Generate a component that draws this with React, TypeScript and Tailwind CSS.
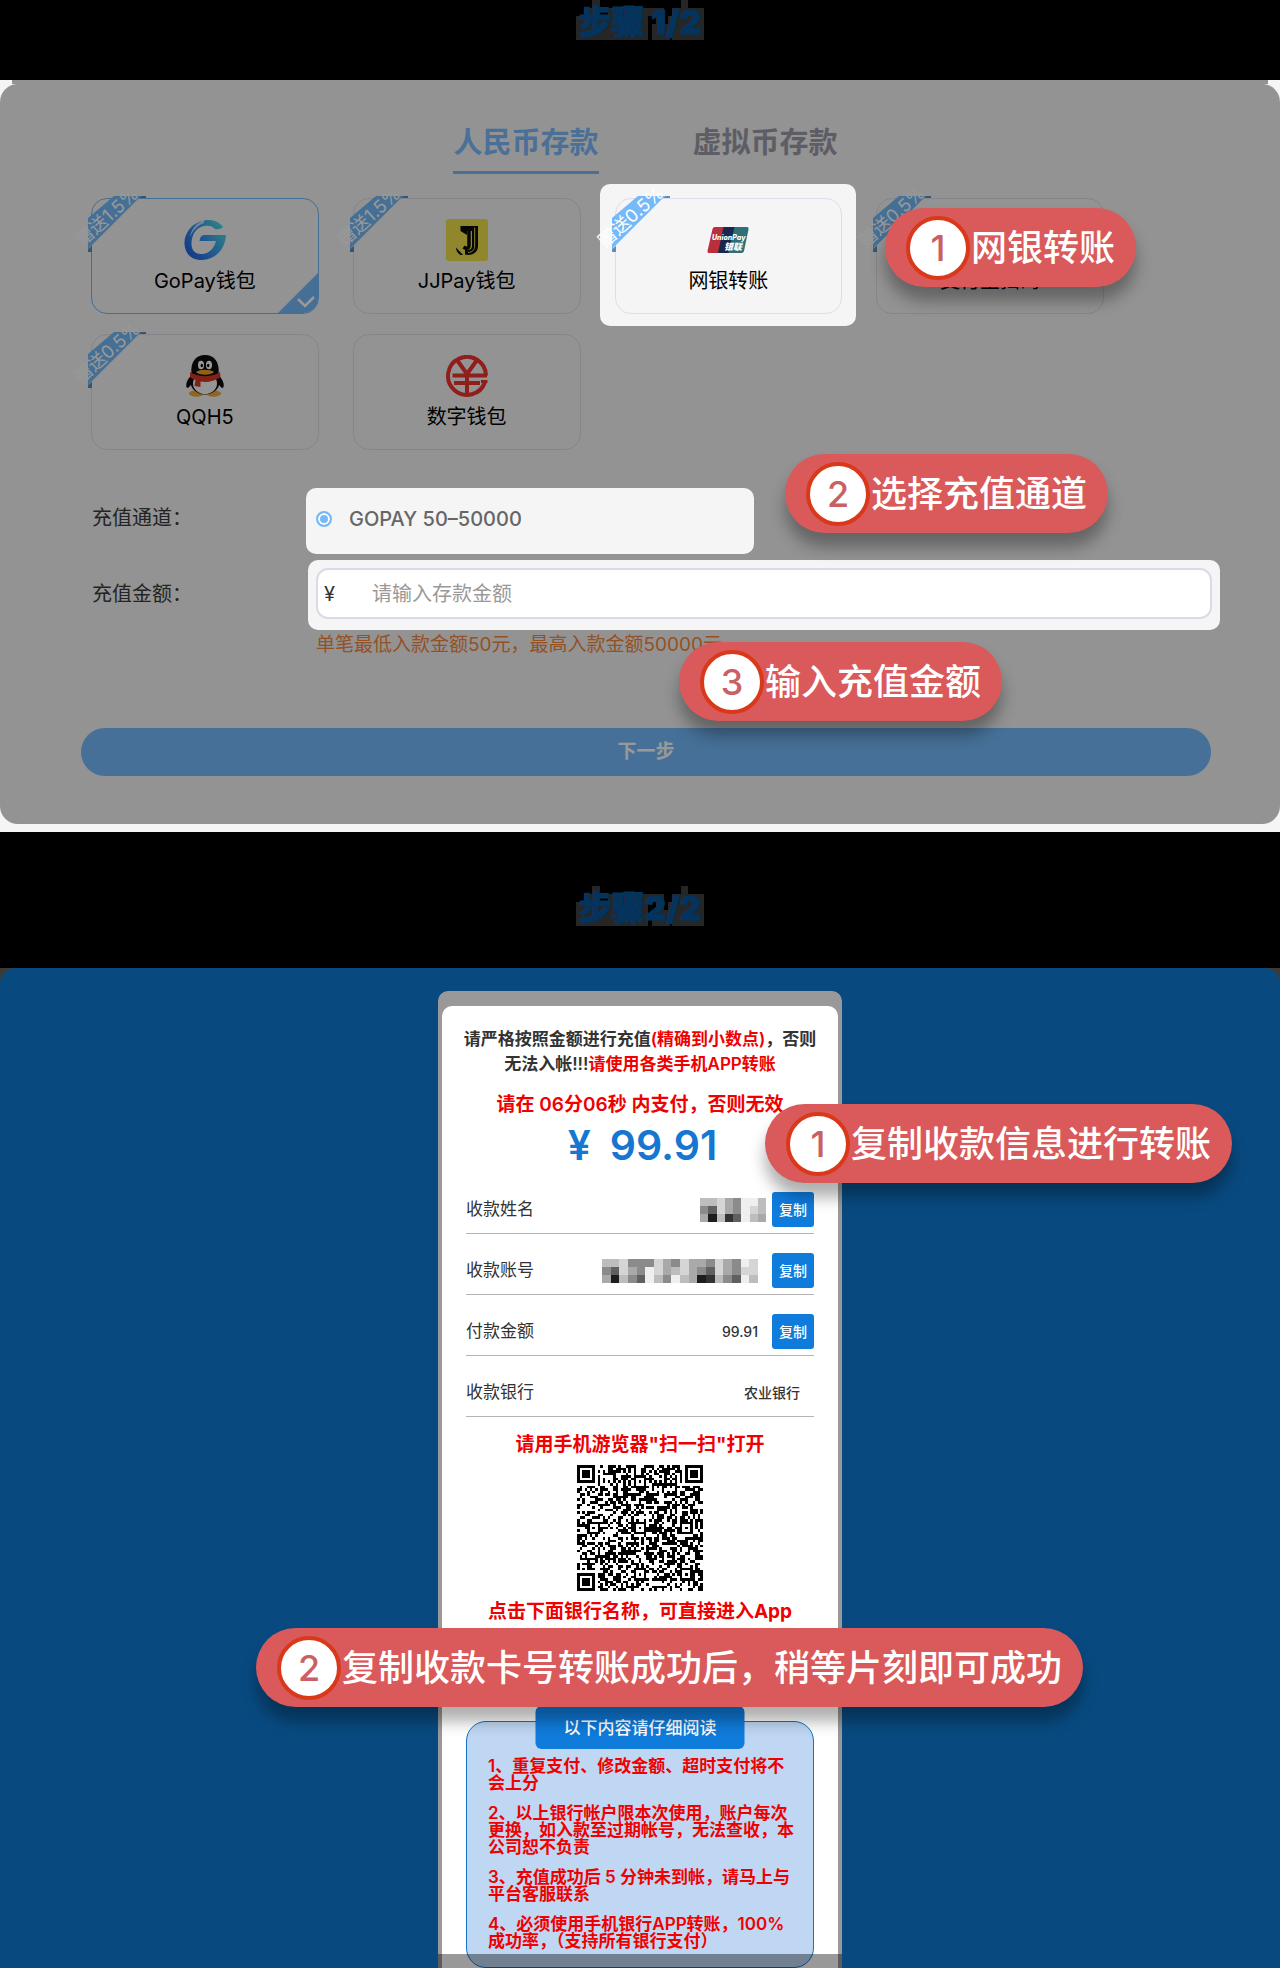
import type { ReactNode } from "react";

/* ---------- icons ---------- */

function GoPayIcon() {
  return (
    <svg viewBox="0 0 42 42" className="h-[42px] w-[42px]" aria-hidden="true">
      <defs>
        <linearGradient id="gopay" x1="0" y1="0.8" x2="1" y2="0.2">
          <stop offset="0" stopColor="#1f5fe0" />
          <stop offset="0.55" stopColor="#3a9cf0" />
          <stop offset="1" stopColor="#4fe0dc" />
        </linearGradient>
      </defs>
      <path
        d="M39 8C35 2 27 0 20 1.500C7 4 0 15 0.500 25C1 35 8 41.500 18 41C31 40.500 41 31 42 16H20C17.500 16 16 18 15.500 22H32C30 30 25 34.500 18 35C11 35.500 7.500 31 7.500 25C7.500 17 11 9 20 7C25 6 29 7 31 10C34 10.500 37 10 39 8Z"
        fill="url(#gopay)"
      />
      <path d="M20 1C12 4 7 11 6 18C9 11 14 6 20 4Z" fill="#f5f5f5" opacity="0.75" />
    </svg>
  );
}

function JJPayIcon() {
  return (
    <svg viewBox="0 0 42 42" className="h-[42px] w-[42px]" aria-hidden="true">
      <rect width="42" height="42" rx="3" fill="#f0e04a" />
      <path d="M14.500 7H32V27C32 34 26 37 19 35.500V30.500C23 31.500 26 30.500 26 27V12H21V16L14.500 12Z" fill="#0a0a0a" />
      <path d="M23 12V26.500C23 29.500 20.500 30 17.500 28" fill="none" stroke="#0a0a0a" strokeWidth="3.500" />
      <path d="M28.700 8.500V27C28.700 31 26 33.400 22 33.400" fill="none" stroke="#e8d846" strokeWidth="1" />
      <path d="M10 28.500L17 36H14.500C11.500 34 10 32 10 28.500Z" fill="#0a0a0a" />
    </svg>
  );
}

function UnionPayIcon() {
  return (
    <svg viewBox="0 0 42 28" className="h-[28px] w-[42px]" aria-hidden="true">
      <path d="M8 1H18L12.500 27H2Q0 27 0.500 25L5.500 3Q6 1 8 1Z" fill="#b9303c" />
      <path d="M16.500 1H30L24 27H11Z" fill="#17294d" />
      <path d="M27.500 1H40Q42 1 41.600 3L37 25Q36.500 27 34.500 27H21.500Z" fill="#2f7078" />
      <text x="5" y="14" fill="#fff" fontSize="7" fontWeight="800" fontStyle="italic" fontFamily="Inter, sans-serif">
        UnionPay
      </text>
      <text x="17" y="23.500" fill="#fff" fontSize="9" fontWeight="800" fontStyle="italic" fontFamily="'Noto Sans CJK SC', sans-serif">
        银联
      </text>
    </svg>
  );
}

function AlipayIcon() {
  return (
    <svg viewBox="0 0 42 42" className="h-[42px] w-[42px]" aria-hidden="true">
      <rect width="42" height="42" rx="8" fill="#1677ff" />
      <path d="M12 12H30M21 8V18M11 18H28C26 26 20 32 14 32C8 32 8 25 14 25C20 25 28 30 38 34" fill="none" stroke="#fff" strokeWidth="3" />
    </svg>
  );
}

function QQIcon() {
  return (
    <svg viewBox="0 0 42 42" className="h-[42px] w-[42px]" aria-hidden="true">
      <ellipse cx="12.500" cy="38.500" rx="7.500" ry="3.200" fill="#f0a93c" />
      <ellipse cx="29.500" cy="38.500" rx="7.500" ry="3.200" fill="#f0a93c" />
      <path d="M8 20C3 24 1 30 3 33C5 33 7 30 8 28ZM34 20C39 24 41 30 39 33C37 33 35 30 34 28Z" fill="#0c0c0c" />
      <ellipse cx="21" cy="27" rx="14.500" ry="12.500" fill="#0c0c0c" />
      <ellipse cx="21" cy="28.500" rx="12" ry="10.500" fill="#f8f8f8" />
      <path d="M7.500 19C6 7 12 0 21 0C30 0 36 7 34.500 19C34 23 8 23 7.500 19Z" fill="#0c0c0c" />
      <ellipse cx="17" cy="10" rx="3" ry="4.200" fill="#fff" />
      <ellipse cx="25" cy="10" rx="3" ry="4.200" fill="#fff" />
      <ellipse cx="17.800" cy="10.500" rx="1.200" ry="1.800" fill="#000" />
      <ellipse cx="24.200" cy="10.500" rx="1.200" ry="1.800" fill="#000" />
      <path d="M12 17C16 14 26 14 30 17C27 20.500 15 20.500 12 17Z" fill="#f5a623" />
      <path d="M6 17C13 22.500 29 22.500 36 17L36.500 22C30 27 22 27.500 16.500 26.500V32L10.500 31L11.500 25C9 24 7 23 6 22Z" fill="#d8352b" />
    </svg>
  );
}

function DigitalYuanIcon() {
  return (
    <svg viewBox="0 0 42 42" className="h-[42px] w-[42px]" aria-hidden="true">
      <g fill="none" stroke="#f0322c" strokeWidth="4">
        <path d="M39 27A19 19 0 1 1 40 20.500" />
        <path d="M11 5L21 19L31 5M21 18V41M6.500 20.500H41M8 28H34" />
      </g>
      <path d="M41.500 26.500H35" stroke="#f0322c" strokeWidth="3" />
    </svg>
  );
}

/* ---------- shared pieces ---------- */

function Callout({ step, children, className }: { step: number; children: ReactNode; className: string }) {
  return (
    <div
      className={
        "absolute z-30 flex h-[79px] items-center gap-px whitespace-nowrap rounded-full bg-[#da595a] px-[21px] text-[36px] leading-[48px] font-medium text-white shadow-[0_14px_16px_rgba(0,0,0,0.32)] " +
        className
      }
    >
      <span className="flex size-16 items-center justify-center rounded-full border-4 border-[#d9391a] bg-white text-[#c96064]">
        {step}
      </span>
      <span>{children}</span>
    </div>
  );
}

const HALO_ROWS = [
  [[16, 24], [105, 112]],
  [[8, 24], [32, 88], [96, 128]],
  [[0, 72], [80, 88], [92, 128]],
  [[0, 72], [76, 128]],
  [[0, 72], [76, 94], [96, 128]],
];

function StepTitle({ children }: { children: ReactNode }) {
  return (
    <h2 className="relative isolate w-32 whitespace-nowrap pt-1 text-center text-[33px] leading-9 font-black text-[#04345e] [-webkit-text-stroke:1px_#04345e]">
      <svg viewBox="0 0 128 40" className="absolute inset-0 -z-10 h-10 w-32" aria-hidden="true">
        {HALO_ROWS.map((row, y) =>
          row.map(([a, b]) => <rect key={y + "-" + a} x={a} y={y * 8} width={b - a} height="8" fill="#262626" />)
        )}
      </svg>
      {children}
    </h2>
  );
}

function Ribbon({ text }: { text: string }) {
  return (
    <span className="pointer-events-none absolute -left-[3px] -top-[2px] h-[56px] w-[58px]">
      <svg viewBox="0 0 58 56" className="absolute inset-0 h-[56px] w-[58px]" aria-hidden="true">
        <path d="M0 22L26 0H53L0 53Z" fill="#75b9f9" />
        <path d="M0 53L4 50V56H0ZM53 0H58V2H51Z" fill="#5a8fc4" />
      </svg>
      <span className="absolute -left-[31px] top-[9px] w-[100px] -rotate-[42deg] whitespace-nowrap text-center text-[18px] leading-[24px] text-white">
        {text}
      </span>
    </span>
  );
}

/* ---------- step 1 ---------- */

type Method = { name: string; icon: ReactNode; bonus?: string; selected?: boolean; spotlight?: boolean };

const METHODS: Method[] = [
  { name: "GoPay钱包", icon: <GoPayIcon />, bonus: "赠送1.5%", selected: true },
  { name: "JJPay钱包", icon: <JJPayIcon />, bonus: "赠送1.5%" },
  { name: "网银转账", icon: <UnionPayIcon />, bonus: "赠送0.5%", spotlight: true },
  { name: "支付宝扫码", icon: <AlipayIcon />, bonus: "赠送0.5%" },
  { name: "QQH5", icon: <QQIcon />, bonus: "赠送0.5%" },
  { name: "数字钱包", icon: <DigitalYuanIcon /> },
];

function MethodCard({ name, icon, bonus, selected, spotlight }: Method) {
  return (
    <div className={spotlight ? "relative z-20" : "relative"}>
      {spotlight && <span className="absolute -bottom-3 -left-[15px] -right-3.5 -top-3.5 -z-10 rounded-[10px] bg-[#f5f5f5]" />}
      <button
        type="button"
        className={
          "relative flex h-[116px] w-full flex-col items-center overflow-hidden rounded-2xl border pt-5 text-[20px] leading-[26px] text-black " +
          (selected ? "border-[#75b9f9]" : "border-[#dcdfe9]")
        }
      >
        <span className="flex h-[42px] items-center">{icon}</span>
        <span className="mt-[7px]">{name}</span>
        {selected && (
          <svg viewBox="0 0 42 42" className="absolute -bottom-px -right-px size-[42px]" aria-hidden="true">
            <path d="M42 0V42H0Z" fill="#75b9f9" />
            <path d="M21 27L28 34L37 25" fill="none" stroke="#fff" strokeWidth="2.500" />
          </svg>
        )}
      </button>
      {bonus && <Ribbon text={bonus} />}
    </div>
  );
}

function DepositStep() {
  return (
    <section className="relative bg-[#f5f5f5] pb-2">
      <div className="mx-3 h-1 bg-[#939393]" />
      <div className="relative isolate pb-12 pt-[41px]">
        <div className="pointer-events-none absolute inset-0 z-10 rounded-[18px] bg-black/40" />

        <div role="tablist" className="flex justify-center gap-[94px] pl-[11px] text-[29px] leading-9 font-bold">
          <button type="button" role="tab" aria-selected="true" className="border-b-[3px] border-[#7dbbfc] pb-2.5 text-[#7dbbfc]">
            人民币存款
          </button>
          <button type="button" role="tab" aria-selected="false" className="border-b-[3px] border-transparent pb-2.5 text-[#9d9ca8]">
            虚拟币存款
          </button>
        </div>

        <div className="mt-6 grid max-w-[1104px] grid-cols-4 gap-x-[34px] gap-y-5 pl-[91px]">
          {METHODS.map((m) => (
            <MethodCard key={m.name} {...m} />
          ))}
        </div>

        <div className="mt-[38px] flex pl-[92px] text-[20px]">
          <span className="w-[214px] shrink-0 leading-[60px] text-[#3c3c3c]">充值通道：</span>
          <label className="relative z-20 flex h-[66px] w-[448px] items-center gap-[17px] rounded-[10px] bg-[#f5f5f5] pb-1 pl-2.5 font-medium text-[#666]">
            <input
              type="radio"
              name="channel"
              defaultChecked
              className="size-4 appearance-none rounded-full border-2 border-[#75b9f9] bg-[#75b9f9] shadow-[inset_0_0_0_2px_#fff]"
            />
            GOPAY 50–50000
          </label>
        </div>

        <div className="mt-1.5 flex pl-[92px] pr-[60px] text-[20px]">
          <label htmlFor="amount" className="w-[216px] shrink-0 leading-[68px] text-[#3c3c3c]">
            充值金额：
          </label>
          <div className="relative z-20 flex-1 rounded-[10px] bg-[#f5f5f5] px-2 pb-[11px] pt-2">
            <div className="flex h-[51px] items-center rounded-xl border-2 border-[#d8dbe8] bg-white pl-[6px] text-[#333]">
              <span className="w-12">¥</span>
              <input id="amount" placeholder="请输入存款金额" className="min-w-0 flex-1 outline-none placeholder:text-[#999]" />
            </div>
          </div>
        </div>

        <p className="pl-[316px] text-[19px] leading-[30px] text-[#f7883c]">单笔最低入款金额50元，最高入款金额50000元</p>

        <div className="pl-[81px] pr-[69px] pt-[68px]">
          <button type="button" className="h-12 w-full rounded-full bg-[#75bbfc] text-[19px] font-bold text-white">
            下一步
          </button>
        </div>
      </div>

      <Callout step={1} className="left-[885px] top-[128px]">网银转账</Callout>
      <Callout step={2} className="left-[785px] top-[374px]">选择充值通道</Callout>
      <Callout step={3} className="left-[679px] top-[562px]">输入充值金额</Callout>
    </section>
  );
}

/* ---------- step 2 ---------- */

const TONES: Record<string, string> = {
  a: "#a9a9a9", b: "#8b8b8b", c: "#d5d5d5", d: "#606060", e: "#1d1d1d", f: "#efefef", g: "#bdbdbd", h: "#333333",
};

function Mosaic({ rows, label, width }: { rows: string[]; label: string; width: string }) {
  const cols = rows[0].length;
  return (
    <svg viewBox={"0 0 " + cols + " 3"} preserveAspectRatio="none" shapeRendering="crispEdges" role="img" aria-label={label} className={"h-6 " + width}>
      {rows.map((r, y) => r.split("").map((t, x) => <rect key={x + "-" + y} x={x} y={y} width="1" height="1" fill={TONES[t]} />))}
    </svg>
  );
}

function qrPath() {
  const n = 49;
  let seed = 20240611;
  const rand = () => {
    seed = (seed * 1103515245 + 12345) % 2147483648;
    return seed / 2147483648;
  };
  const corners = [[0, 0], [n - 7, 0], [0, n - 7]];
  const marks = [[24, 6], [6, 24], [24, 24], [42, 24], [24, 42], [42, 42]];
  let d = "";
  for (let y = 0; y < n; y++) {
    for (let x = 0; x < n; x++) {
      let on = rand() < 0.5;
      if (y === 6 && x > 7 && x < n - 8) on = x % 2 === 0;
      if (x === 6 && y > 7 && y < n - 8) on = y % 2 === 0;
      for (const [cx, cy] of marks) {
        const r = Math.max(Math.abs(x - cx), Math.abs(y - cy));
        if (r <= 2) on = r !== 1;
      }
      for (const [cx, cy] of corners) {
        const r = Math.max(Math.abs(x - cx - 3), Math.abs(y - cy - 3));
        if (r <= 4) on = r !== 2 && r !== 4;
      }
      if (on) d += "M" + x + " " + y + "h1v1h-1z";
    }
  }
  return d;
}

function InfoRow({ label, children, copy }: { label: string; children: ReactNode; copy?: boolean }) {
  return (
    <div className="flex h-[61px] items-center border-b border-[#b4b4b4] pt-[13px]">
      <dt className="flex-1 text-left text-[17px] text-[#333]">{label}</dt>
      <dd className="flex items-center text-[14px] font-medium text-[#333]">
        {children}
        {copy && (
          <button type="button" className="h-[35px] w-[42px] rounded-[3px] bg-[#0f7bdb] text-[14px] font-medium text-white">
            复制
          </button>
        )}
      </dd>
    </div>
  );
}

function TransferStep() {
  return (
    <section className="relative overflow-hidden bg-[#3a3a3a]">
      <div className="rounded-t-2xl bg-[#084a80] pt-[23px]">
        <div className="relative mx-auto w-[404px] rounded-t-[10px] bg-[#999] px-1 pt-[15px]">
          <div className="rounded-t-[10px] bg-white px-6 pt-[21px] text-center">
            <p className="-mx-2 text-[17px] leading-[25px] font-semibold text-[#333]">
              请严格按照金额进行充值<span className="text-[#f00000]">(精确到小数点)</span>，否则
              <br />
              无法入帐!!!<span className="text-[#f00000]">请使用各类手机APP转账</span>
            </p>
            <p className="mt-[13px] text-[19px] leading-[30px] font-semibold text-[#f00000]">请在 06分06秒 内支付，否则无效</p>
            <p className="flex justify-center gap-[19px] pl-[5px] text-[41px] leading-[50px] font-semibold text-[#1577d0]">
              <span>¥</span>
              <span>99.91</span>
            </p>
            <dl className="mt-[3px]">
              <InfoRow label="收款姓名" copy>
                <span className="mr-1.5"><Mosaic rows={["ggcabffg", "bdcabfcg", "aeghdfga"]} label="收款姓名已隐藏" width="w-[66px]" /></span>
              </InfoRow>
              <InfoRow label="收款账号" copy>
                <span className="mr-3.5"><Mosaic rows={["ggcbbbcabcaabcabfc", "bdcabfcagcabdcabcc", "aegbdfgbfgaehgbdfg"]} label="收款账号已隐藏" width="w-[156px]" /></span>
              </InfoRow>
              <InfoRow label="付款金额" copy>
                <span className="mr-3.5">99.91</span>
              </InfoRow>
              <InfoRow label="收款银行">
                <span className="mr-3.5">农业银行</span>
              </InfoRow>
            </dl>
            <p className="mt-3 text-[19px] leading-8 font-bold text-[#f00000]">请用手机游览器"扫一扫"打开</p>
            <svg viewBox="0 0 49 49" shapeRendering="crispEdges" role="img" aria-label="二维码" className="mx-auto mt-1 size-[126px]">
              <path d={qrPath()} fill="#000" />
            </svg>
            <p className="mt-1.5 text-[19px] leading-[30px] font-bold text-[#f00000]">点击下面银行名称，可直接进入App</p>
            <div className="relative mt-[94px] rounded-[20px] border border-[#1173cb] bg-[#bfd7f3] px-[21px] pb-[17px] pt-9 text-left">
              <h3 className="absolute -top-4 left-1/2 h-[43px] w-[209px] -translate-x-1/2 rounded-md bg-[#0f7bdb] text-center text-[17px] leading-[44px] font-medium text-white">
                以下内容请仔细阅读
              </h3>
              <ol className="flex flex-col gap-[13px] whitespace-nowrap text-[17px] leading-[17px] font-semibold text-[#f00000]">
                <li>1、重复支付、修改金额、超时支付将不<br />会上分</li>
                <li>2、以上银行帐户限本次使用，账户每次<br />更换，如入款至过期帐号，无法查收，本<br />公司恕不负责</li>
                <li>3、充值成功后 5 分钟未到帐，请马上与<br />平台客服联系</li>
                <li>4、必须使用手机银行APP转账，100%<br />成功率，（支持所有银行支付）</li>
              </ol>
            </div>
          </div>
          <div className="absolute inset-x-0 bottom-0 h-3.5 bg-black/40" />
        </div>
      </div>

      <Callout step={1} className="left-[765px] top-[136px]">复制收款信息进行转账</Callout>
      <Callout step={2} className="left-[256px] top-[660px]">复制收款卡号转账成功后，稍等片刻即可成功</Callout>
    </section>
  );
}

export default function App() {
  return (
    <main lang="zh-CN" className="bg-black font-['Inter','Noto_Sans_CJK_SC',sans-serif]">
      <header className="flex h-20 justify-center">
        <StepTitle>步骤 1/2</StepTitle>
      </header>
      <DepositStep />
      <header className="flex h-[136px] items-center justify-center pt-3">
        <StepTitle>步骤2/2</StepTitle>
      </header>
      <TransferStep />
    </main>
  );
}
